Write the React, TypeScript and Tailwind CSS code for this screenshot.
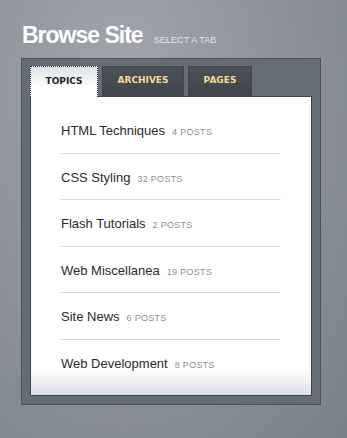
import React from 'react';

const topics = [
    {name: 'HTML Techniques', count: 4},
    {name: 'CSS Styling', count: 32},
    {name: 'Flash Tutorials', count: 2},
    {name: 'Web Miscellanea', count: 19},
    {name: 'Site News', count: 6},
    {name: 'Web Development', count: 8},
];

const tabs = ['Topics', 'Archives', 'Pages'];

export default function App() {
    return (
        <div
            className="w-[347px] h-[438px] overflow-hidden bg-[radial-gradient(ellipse_at_35%_20%,#a0a6ab_0%,#8d9399_50%,#7a8188_100%)] pl-[21px] pt-[22px] font-['Liberation_Sans',Arial,sans-serif]">
            <div className="flex items-baseline h-[26px]">
                <h1 className="text-[23px] font-bold tracking-[-1px] text-white leading-[26px] pl-[1px]">Browse Site</h1>
                <span className="ml-[11px] text-[9px] uppercase text-[#e3e6e9] tracking-[0.1px]">Select a tab</span>
            </div>

            <div className="mt-[10px] w-[300px] h-[347px] border border-[#4a5159] bg-[#646c74] px-2 pt-[7px] pb-2 flex flex-col">
                <div className="flex gap-1 h-[31px] relative z-10 font-['DejaVu_Sans',Verdana,sans-serif]">
                    {tabs.map((t, i) =>
                        i === 0 ? (
                            <div key={t}
                                 className="w-[68px] h-[31px] flex items-center justify-center border border-dotted border-[#2a2e33] border-b-0 bg-[linear-gradient(#dfe2e5,#ffffff_70%)] text-[9px] font-bold uppercase text-[#1e2227]">
                                {t}
                            </div>
                        ) : (
                            <div key={t}
                                 className={`${i === 1 ? 'w-[82px]' : 'w-[64px]'} h-[30px] flex items-center justify-center border border-[#41464d] bg-[linear-gradient(#4c5159,#40454c)] text-[9px] font-bold uppercase text-[#f7d995]`}>
                                {t}
                            </div>
                        )
                    )}
                </div>
                <div className="-mt-[1px] flex-1 border border-[#3e444b] bg-[linear-gradient(180deg,#ffffff_0%,#ffffff_91%,#dcdfe2_100%)] pl-[30px] pt-[10px]">
                    <ul className="w-[220px]">
                        {topics.map((t, i) => (
                            <li key={t.name}
                                className={`h-[46.5px] pt-[14px] ${i < topics.length - 1 ? 'border-b border-[#d8dde1]' : ''}`}>
                                <div className="flex items-baseline h-[20px] leading-[20px]">
                                    <span className="text-[13px] text-[#2b2b2b]">{t.name}</span>
                                    <span className="ml-[7px] text-[9px] uppercase text-[#8a9096] tracking-[0.3px]">{t.count} posts</span>
                                </div>
                            </li>
                        ))}
                    </ul>
                </div>
            </div>
        </div>
    );
}
